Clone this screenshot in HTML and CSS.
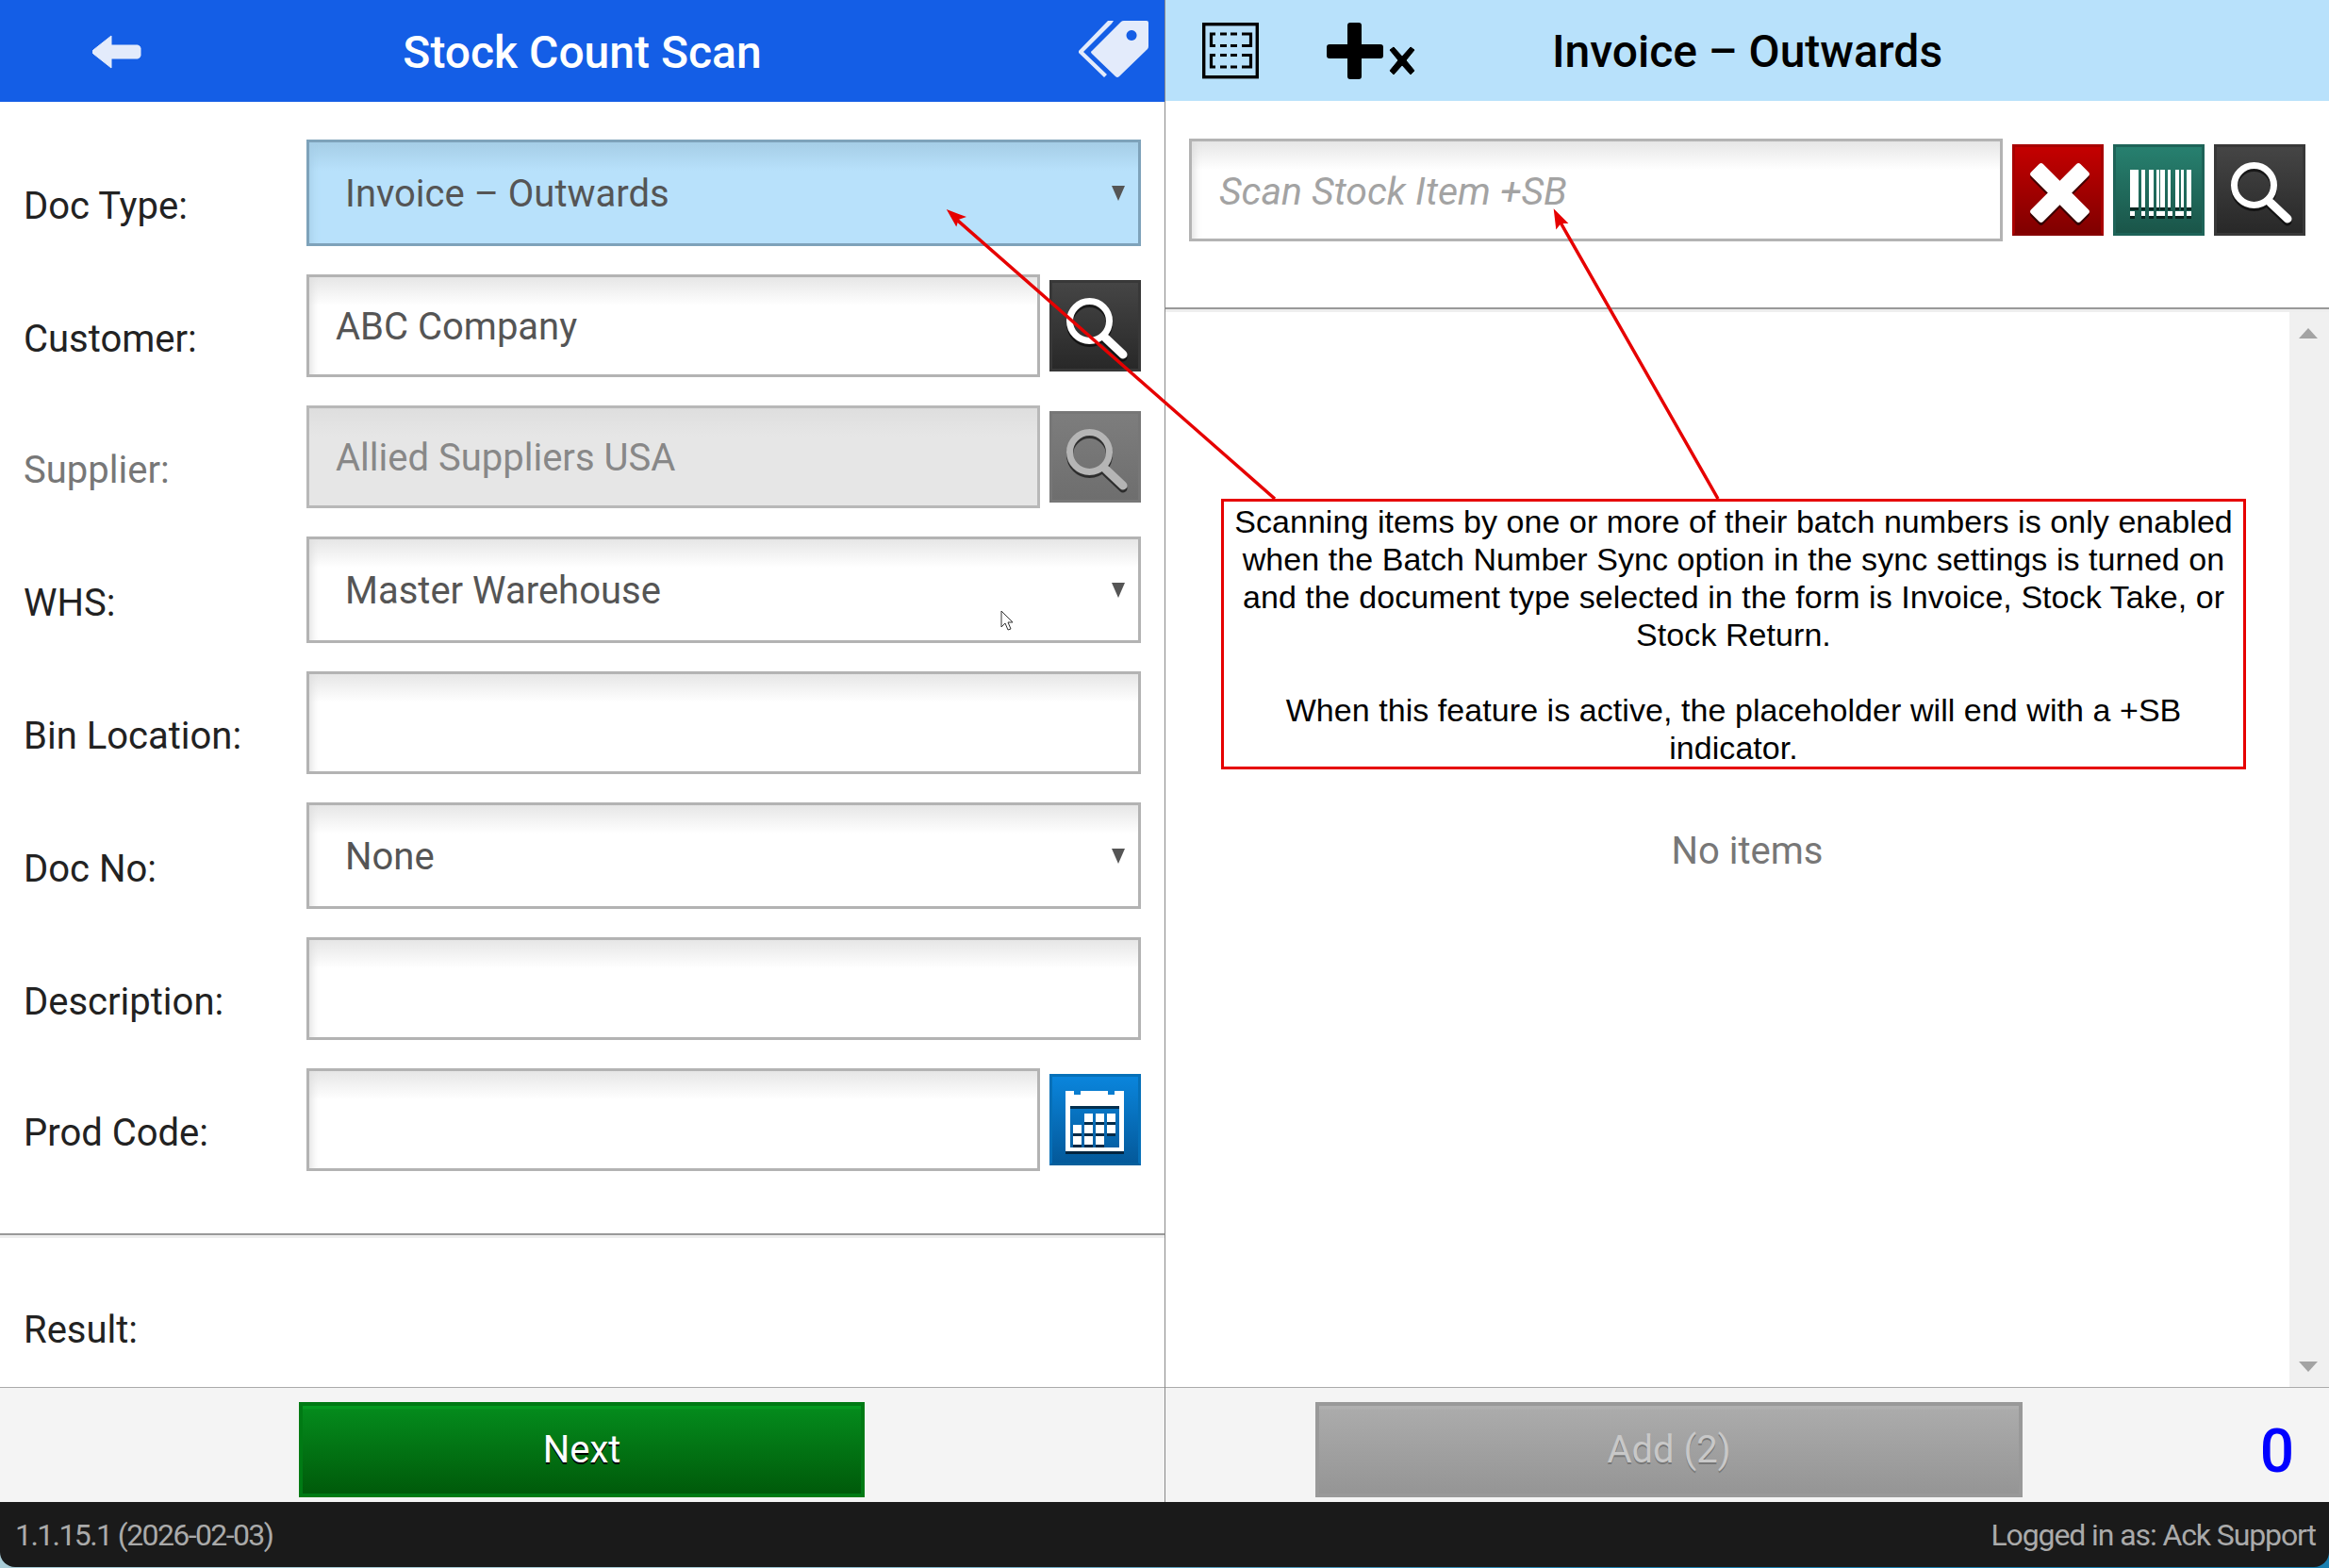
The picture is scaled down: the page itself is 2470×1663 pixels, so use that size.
FILE: index.html
```html
<!DOCTYPE html>
<html lang="en">
<head>
<meta charset="utf-8">
<title>Stock Count Scan</title>
<link rel="stylesheet" href="styles.css">
</head>
<body>
<div class="app">
  <main class="panes">
    <section class="pane pane-left">
      <header class="head head-blue">
        <div class="head-side">
          <svg class="ico-back" width="52" height="36" viewBox="0 0 52 36"><path d="M20 1 1 16a2.500 2.500 0 0 0 0 4l19 15V25h28a4 4 0 0 0 3-3V14a4 4 0 0 0-3-3H20z" fill="#e3ebfb" stroke="#e3ebfb" stroke-linejoin="round"/></svg>
        </div>
        <h1 class="title">Stock Count Scan</h1>
        <div class="head-side head-end">
          <svg class="ico-tag" width="76" height="62" viewBox="0 0 76 62"><path d="M15 33 46 2q1-1 3-1h24q2 0 2 2v25q0 2-1 3L44 60q-2 2-4 0L15 36q-2-2 0-3zM57 11a5.500 5.500 0 1 0 .1 0z" fill="#e3ebfb" fill-rule="evenodd"/><path d="M38 1h-6L1 33v2l27 26 3-3L6 34 36 4z" fill="#e3ebfb"/></svg>
        </div>
      </header>
      <div class="form">
        <div class="row row-tall">
          <label class="lbl">Doc Type:</label>
          <div class="select select-blue"><select class="ctl"><option>Invoice – Outwards</option></select></div>
        </div>
        <div class="row">
          <label class="lbl">Customer:</label>
          <input class="input" value="ABC Company">
          <button class="ibtn ibtn-dark"><svg width="91" height="91" viewBox="3 3 91 91"><use href="#mag"/></svg></button>
        </div>
        <div class="row row-off">
          <label class="lbl">Supplier:</label>
          <input class="input" value="Allied Suppliers USA" disabled>
          <button class="ibtn ibtn-off" disabled><svg width="91" height="91" viewBox="3 3 91 91"><use href="#mag"/></svg></button>
        </div>
        <div class="row row-tall">
          <label class="lbl">WHS:</label>
          <div class="select"><select class="ctl"><option>Master Warehouse</option></select></div>
        </div>
        <div class="row">
          <label class="lbl">Bin Location:</label>
          <input class="input input-wide">
        </div>
        <div class="row row-tall">
          <label class="lbl">Doc No:</label>
          <div class="select"><select class="ctl"><option>None</option></select></div>
        </div>
        <div class="row">
          <label class="lbl">Description:</label>
          <input class="input input-wide">
        </div>
        <div class="row">
          <label class="lbl">Prod Code:</label>
          <input class="input">
          <button class="ibtn ibtn-blue">
            <svg width="91" height="91" viewBox="3 3 91 91">
              <g class="ico-shadow" fill="#fff">
                <path fill-rule="evenodd" d="M17 18h9v4h7v-4h29v4h7v-4h10v64H17zM22 34v44h52V34z"/>
                <path d="M37 42h9v9h-9zM49 42h9v9h-9zM61 42h9v9h-9zM25 54h9v9h-9zM37 54h9v9h-9zM49 54h9v9h-9zM61 54h9v9h-9zM25 66h9v9h-9zM37 66h9v9h-9zM49 66h9v9h-9z"/>
              </g>
            </svg>
          </button>
        </div>
      </div>
      <div class="result"><span class="lbl lbl-result">Result:</span></div>
      <footer class="foot foot-left"><button class="cta cta-green">Next</button></footer>
    </section>

    <section class="pane pane-right">
      <header class="head head-light">
        <div class="head-side head-icons">
          <svg width="60" height="60" viewBox="0 0 60 60">
            <rect x="1.700" y="1.700" width="56.600" height="56" fill="none" stroke="#000" stroke-width="3.400"/>
            <g fill="none" stroke="#000" stroke-width="3.200">
              <path d="M14 12H9.500V24.500H14M42 12H51.500V24.500H42M19 12h7M30 12h7M19 24.500h7M30 24.500h7"/>
              <path d="M14 34.500H9.500V47H14M42 34.500H51.500V47H42M19 34.500h7M30 34.500h7M19 47h7M30 47h7"/>
            </g>
          </svg>
          <svg class="ico-plus" width="94" height="60" viewBox="0 0 94 60">
            <path d="M25 0h9a3 3 0 0 1 3 3v20h20a3 3 0 0 1 3 3v9a3 3 0 0 1-3 3H37v19a3 3 0 0 1-3 3h-9a3 3 0 0 1-3-3V38H3a3 3 0 0 1-3-3v-9a3 3 0 0 1 3-3h19V3a3 3 0 0 1 3-3z"/>
            <path d="m71 26 9 10 9-10 4 3-9 11 9 11-4 4-9-10-9 10-4-4 9-11-9-11z" stroke="#000" stroke-width="1" stroke-linejoin="round"/>
          </svg>
        </div>
        <h1 class="title title-dark">Invoice – Outwards</h1>
        <div class="head-side"></div>
      </header>
      <div class="scan">
        <input class="input input-scan" placeholder="Scan Stock Item +SB">
        <button class="ibtn ibtn-red">
          <svg width="91" height="91" viewBox="3 3 91 91"><g class="ico-shadow" fill="#fff"><rect x="-37" y="-9" width="74" height="18" rx="3" transform="translate(50.500 51.500) rotate(45)"/><rect x="-37" y="-9" width="74" height="18" rx="3" transform="translate(50.500 51.500) rotate(-45)"/></g></svg>
        </button>
        <button class="ibtn ibtn-teal">
          <svg width="91" height="91" viewBox="3 3 91 91"><g class="ico-shadow" fill="#fff"><path d="M18 27h9v40h-9zM30 27h4v40h-4zM38 27h5v40h-5zM46 27h3v40h-3zM50 27h5v40h-5zM58 27h3v40h-3zM66 27h4v40h-4zM72 27h3v40h-3zM78 27h5v40h-5z"/><path d="M18 71h5v5h-5zM30 71h4v5h-4zM38 71h5v5h-5zM46 71h9v5h-9zM58 71h5v5h-5zM66 71h9v5h-9zM78 71h5v5h-5z"/></g></svg>
        </button>
        <button class="ibtn ibtn-dark"><svg width="91" height="91" viewBox="3 3 91 91"><use href="#mag"/></svg></button>
      </div>
      <div class="list">
        <p class="empty">No items</p>
        <div class="scrollbar"><span class="arr arr-up"></span><span class="arr arr-down"></span></div>
      </div>
      <footer class="foot foot-right">
        <button class="cta cta-grey">Add (2)</button>
        <span class="count">0</span>
      </footer>
    </section>
  </main>
  <div class="status">
    <span class="ver">1.1.15.1 (2026-02-03)</span>
    <span class="who">Logged in as: Ack Support</span>
  </div>
</div>

<svg class="arrows" width="2470" height="1663" viewBox="0 0 2470 1663">
  <path d="M1352 529 1009 228M1822 529 1651 229" fill="none" stroke="#e60000" stroke-width="3.500"/>
  <path d="M1006 224 1022 230 1016 232 1014 238zM1649 224 1661 236 1655 236 1651 241z" fill="#e60000" stroke="#e60000" stroke-width="2"/>
  <path d="M1062 648v17l4-4 3 7 3-1-3-7h5z" fill="#fff" stroke="#333" stroke-width="1"/>
</svg>
<div class="note">
  <p>Scanning items by one or more of their batch numbers is only enabled when the Batch Number Sync option in the sync settings is turned on and the document type selected in the form is Invoice, Stock Take, or Stock Return.</p>
  <p>When this feature is active, the placeholder will end with a +SB indicator.</p>
</div>

<svg class="defs" width="0" height="0">
  <defs>
    <g id="mag" class="ico-shadow" fill="none" stroke="currentColor">
      <circle cx="42.500" cy="43.500" r="21" stroke-width="7"/>
      <path d="M60 62 78 79" stroke-width="9" stroke-linecap="round"/>
    </g>
  </defs>
</svg>
</body>
</html>
```

FILE: styles.css
```css
* { box-sizing: border-box; }
html, body { margin: 0; height: 100%; }
body {
  width: 2470px;
  height: 1663px;
  position: relative;
  overflow: hidden;
  font-family: Roboto, sans-serif;
  background: linear-gradient(to right, #a9cdd8, #a9cdd8 30%, #1a7fb0 70%);
}
.app { display: flex; flex-direction: column; height: 1662px; }
.panes { display: flex; height: 1593px; background: #fff; }
.pane { display: flex; flex-direction: column; height: 100%; }
.pane-left { width: 1236px; border-right: 1px solid #888; }
.pane-right { flex: 1; min-width: 0; position: relative; }

.head { display: grid; grid-template-columns: 1fr auto 1fr; align-items: center; flex: none; }
.head-blue { height: 108px; background: #145ee6; }
.head-light { height: 107px; background: #b8e1fb; }
.head-side { display: flex; align-items: center; }
.head-end { justify-content: flex-end; }
.head-icons { gap: 72px; padding-left: 39px; padding-top: 1px; }
.ico-back { margin-left: 98px; margin-top: 2px; }
.ico-tag { margin-right: 16px; margin-top: -4px; }
.ico-plus { display: block; }
.title { margin: 0; padding-top: 2px; font-size: 48px; font-weight: 500; color: #fff; white-space: nowrap; }
.title-dark { color: #000; }

.form { flex: 1; min-height: 0; display: flex; flex-direction: column; gap: 30px; padding: 40px 25px 0 25px; }
.row { display: flex; align-items: center; height: 109px; gap: 10px; }
.row-tall { height: 113px; }
.row-off .lbl { color: #777; }
.lbl { width: 300px; flex: none; font-size: 40px; color: #222; padding-top: 27px; margin-right: -10px; white-space: nowrap; }
.lbl-result { padding-top: 0; }

.input {
  flex: 1;
  min-width: 0;
  height: 109px;
  padding: 2px 0 0 28px;
  border: 3px solid #b3b3b3;
  border-radius: 0;
  outline: 0;
  font: 40px Roboto, sans-serif;
  color: #555;
  background: linear-gradient(to bottom, #e6e6e6, #fff 30px) #fff;
  box-shadow: inset 10px 0 10px -8px #ddd;
}
.input:disabled { background: linear-gradient(to bottom, #dedede, #e6e6e6 30px); border-color: #b8b8b8; color: #888; box-shadow: none; opacity: 1; -webkit-text-fill-color: #888; }
.input::placeholder { color: #a3a3a3; font-style: italic; opacity: 1; }

.select { flex: 1; height: 113px; position: relative; }
.select::after {
  content: "";
  position: absolute;
  right: 17px;
  top: 49px;
  border-left: 7px solid transparent;
  border-right: 7px solid transparent;
  border-top: 16px solid #555;
}
.ctl {
  appearance: none;
  width: 100%;
  height: 100%;
  padding: 2px 0 0 38px;
  border: 3px solid #b3b3b3;
  border-radius: 0;
  outline: 0;
  font: 40px Roboto, sans-serif;
  color: #555;
  background: linear-gradient(to bottom, #e6e6e6, #fff 30px) #fff;
  box-shadow: inset 10px 0 10px -8px #ddd;
}
.select-blue .ctl {
  border-color: #7ea2ba;
  background: linear-gradient(to bottom, #a5cde6, #b8e1fb 30px) #b8e1fb;
  box-shadow: inset 10px 0 10px -8px #a5cde6;
}

.ibtn { flex: none; width: 97px; height: 97px; padding: 0; border: 3px solid; border-radius: 0; display: block; color: #fff; }
.ibtn svg { display: block; }
.ibtn-dark { border-color: #383838; background: linear-gradient(#454545, #282828); }
.ibtn-off { color: #b5b5b5; border-color: #777; background: linear-gradient(#7d7d7d, #6e6e6e); }
.ibtn-red { border-color: #a80000 #a80000 #860000; background: linear-gradient(#c40000, #800000); }
.ibtn-teal { border-color: #1e6358; background: linear-gradient(#27806f, #1a5549); }
.ibtn-blue { border-color: #0670b8 #0670b8 #055f9c; background: linear-gradient(#0a85dc, #04599a); }
.ico-shadow { filter: drop-shadow(0 3px 0 rgba(0,0,0,.6)); }

.result {
  flex: none;
  height: 163px;
  border-top: 2px solid #999;
  box-shadow: inset 0 3px 0 #eee;
  padding: 77px 0 0 25px;
}
.lbl-result { display: block; width: auto; line-height: 47px; margin: 0; }

.foot { flex: none; height: 122px; border-top: 1px solid #aaa; background: #f4f4f4; display: flex; padding-top: 15px; }
.foot-left { justify-content: center; padding-right: 1px; }
.foot-right { padding-left: 159px; padding-right: 38px; }
.cta { height: 101px; padding: 0; border: 4px solid; border-radius: 0; font: 40px Roboto, sans-serif; }
.cta-green { width: 600px; color: #fff; border-color: #007a14; background: linear-gradient(#049a20 3px, #048a1c 4px, #005a0a); text-shadow: 0 2px 0 #000; }
.cta-grey { width: 750px; color: #c8c8c8; border-color: #999; background: linear-gradient(#b0b0b0 3px, #ababab 4px, #959595); text-shadow: 0 2px 0 #777; }
.count { margin-left: auto; font-size: 64px; font-weight: 500; line-height: 101px; color: #0000ff; padding-top: 2px; letter-spacing: -1px; }

.scan { flex: none; height: 219px; display: flex; align-items: flex-start; gap: 10px; padding: 40px 25px 0 25px; }
.scan .ibtn { margin-top: 6px; }
.input-scan { height: 109px; padding-left: 29px; font-size: 41px; }

.list { flex: 1; min-height: 0; position: relative; border-top: 2px solid #999; box-shadow: inset 0 3px 0 #eee; }
.empty { margin: 0; padding-top: 551px; text-align: center; font-size: 40px; line-height: 47px; color: #777; }
.scrollbar { position: absolute; right: 0; top: 3px; bottom: 0; width: 42px; background: #f0f0f0; }
.arr { position: absolute; left: 10px; border-left: 10.500px solid transparent; border-right: 10.500px solid transparent; }
.arr-up { top: 17px; border-bottom: 11px solid #a3a3a3; }
.arr-down { bottom: 16px; border-top: 11px solid #a3a3a3; }

.status {
  flex: none;
  height: 69px;
  display: flex;
  justify-content: space-between;
  align-items: center;
  padding: 0 14px 0 16px;
  background: #1a1a1a;
  color: #aaa;
  font-size: 32px;
  border-radius: 0 0 16px 16px;
}
.ver { letter-spacing: -1.6px; }
.who { letter-spacing: -1.1px; }

.arrows { position: absolute; left: 0; top: 0; pointer-events: none; }
.defs { position: absolute; }
.note {
  position: absolute;
  left: 1295px;
  top: 529px;
  width: 1087px;
  height: 287px;
  padding: 1px 8px 0;
  border: 3px solid #e60000;
  background: #fff;
  font: 34px/40px "Liberation Sans", Arial, sans-serif;
  letter-spacing: .06px;
  color: #000;
  text-align: center;
}
.note p { margin: 0 0 40px; }
```
